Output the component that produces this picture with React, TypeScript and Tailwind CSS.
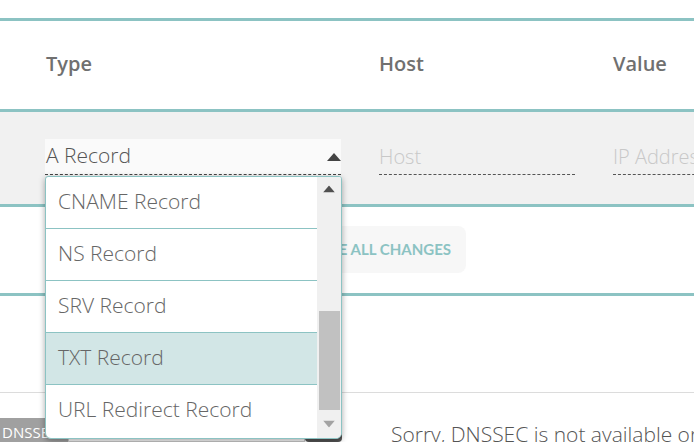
import React from 'react';

const options = ['CNAME Record', 'NS Record', 'SRV Record', 'TXT Record', 'URL Redirect Record'];

function Triangle({ up, className }: { up?: boolean; className?: string }) {
  return (
    <svg width="14" height="8" viewBox="0 0 14 8" className={className}>
      {up ? <path d="M0 8 L7 0 L14 8 Z" fill="currentColor" /> : <path d="M0 0 L7 8 L14 0 Z" fill="currentColor" />}
    </svg>
  );
}

export default function App() {
  return (
    <div className="relative w-[694px] h-[442px] overflow-hidden bg-white text-[#555]" style={{ fontFamily: '"Open Sans", sans-serif' }}>
      <div className="h-[18px]" />

      {/* header */}
      <div className="border-t-[3px] border-[#8cc3c3] h-[91px] flex items-center pl-[46px] pb-[2px] text-[20px] font-semibold text-[#707070] whitespace-nowrap">
        <div className="w-[333px] shrink-0">Type</div>
        <div className="w-[234px] shrink-0">Host</div>
        <div className="shrink-0">Value</div>
      </div>

      {/* input row */}
      <div className="border-t-[3px] border-[#8cc3c3] bg-[#f1f1f1] h-[95px] flex pl-[45px] pt-[27px] whitespace-nowrap">
        <div className="w-[296px] shrink-0 h-[36px] bg-[#fafafa] border-b border-dashed border-[#444] flex items-center justify-between text-[21px] font-light text-[#555] leading-none">
          <span className="pl-px pb-[2px]">A Record</span>
          <Triangle up className="text-[#444]" />
        </div>
        <div className="w-[196px] shrink-0 ml-[38px] h-[36px] border-b border-dashed border-[#555] flex items-center text-[20px] font-light text-[#c8c8c8]">
          Host
        </div>
        <div className="w-[196px] shrink-0 ml-[38px] h-[36px] border-b border-dashed border-[#555] flex items-center text-[20px] font-light text-[#c8c8c8]">
          IP Address
        </div>
      </div>

      {/* save row */}
      <div className="border-t-[3px] border-[#8cc3c3] h-[89px] flex items-start pt-[19px] pl-[266px]">
        <button className="h-[47px] w-[200px] shrink-0 rounded-[8px] bg-[#f7f7f7] flex items-center justify-end pr-[15px] text-[15px] font-bold text-[#8cc3c3] whitespace-nowrap" style={{ fontFamily: 'Lato, sans-serif' }}>
          SAVE ALL CHANGES
        </button>
      </div>

      <div className="border-t-[3px] border-[#8cc3c3] h-[99px]" />
      <div className="border-t border-[#dcdcdc] h-[26px]" />

      {/* dnssec row */}
      <div className="flex items-start h-[24px] whitespace-nowrap">
        <div className="h-[24px] w-[68px] shrink-0 bg-[#a0a0a0] text-white text-[15px] leading-[28px] pl-[2px]">DNSSEC</div>
        <div className="h-[24px] w-[237px] shrink-0 border border-[#ccc] bg-white" />
        <div className="h-[24px] w-[37px] shrink-0 bg-[#555] rounded-[4px] flex justify-center pt-[8px]">
          <div className="w-[3px] h-[4px] bg-white" />
        </div>
        <div className="ml-[49px] shrink-0 text-[21px] font-light text-[#555] leading-none pt-[6px]">Sorry, DNSSEC is not available on this domain.</div>
      </div>

      {/* dropdown list overlay */}
      <div className="absolute left-[45px] top-[176px] w-[297px] h-[263px] bg-white border border-[#8cc3c3] rounded-b-[6px] rounded-t-[3px] shadow-[0_2px_6px_rgba(0,0,0,0.35)] flex overflow-hidden">
        <div className="flex-1 flex flex-col">
          {options.map((o, i) => (
            <div
              key={o}
              className={`h-[52px] shrink-0 flex items-center pl-[12px] pb-[2px] text-[21px] font-light text-[#666] ${i < options.length - 1 ? 'border-b border-[#8cc3c3]' : ''} ${o === 'TXT Record' ? 'bg-[#d2e6e6]' : ''}`}
            >
              {o}
            </div>
          ))}
        </div>
        <div className="w-[24px] shrink-0 bg-[#f0f0f0] flex flex-col items-center">
          <Triangle up className="text-[#505050] mt-[8px] scale-[0.85]" />
          <div className="w-[21px] h-[99px] bg-[#c1c1c1] mt-[118px]" />
          <Triangle className="text-[#a3a3a3] mt-[10px] scale-[0.85]" />
        </div>
      </div>
    </div>
  );
}
